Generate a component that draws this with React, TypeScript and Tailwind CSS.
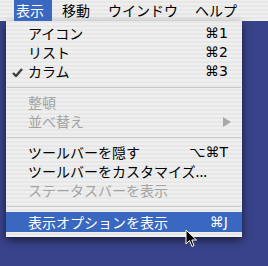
import React from "react";

const stripes =
  "bg-[repeating-linear-gradient(0deg,#efefef_0px,#efefef_2px,#e7e7e7_2px,#e7e7e7_4px)]";

const Row = ({
  label,
  shortcut,
  checked,
  disabled,
  arrow,
}: {
  label: string;
  shortcut?: string;
  checked?: boolean;
  disabled?: boolean;
  arrow?: boolean;
}) => (
  <div
    className={`relative flex h-[19px] items-center pl-[22px] pr-[14px] ${
      disabled ? "text-[#a3a3a3]" : "text-black"
    }`}
  >
    {checked && (
      <svg
        className="absolute left-[6px] top-[6px]"
        width="11"
        height="9"
        viewBox="0 0 11 9"
      >
        <path d="M1 5 L4 8 L10 1" stroke="#404040" strokeWidth="2.4" fill="none" />
      </svg>
    )}
    <span className="flex-1">{label}</span>
    {shortcut && (
      <span className="font-['DejaVu_Sans',sans-serif] text-[14px]">{shortcut}</span>
    )}
    {arrow && (
      <span className="mr-[-3px] h-0 w-0 border-y-[5px] border-l-[8px] border-y-transparent border-l-[#a8a8a8]" />
    )}
  </div>
);

const Sep = () => (
  <div className="flex h-[12px] items-center">
    <div className="mx-[1px] h-px flex-1 bg-[#c9c9c9]" />
  </div>
);

export default function App() {
  return (
    <div className="relative h-[266px] w-[268px] overflow-hidden bg-[#39438a] font-['Noto_Sans_CJK_JP',sans-serif] text-[14px] leading-[19px]">
      <div className={`flex h-[21px] items-center ${stripes} text-black`}>
        <div className="ml-[14px] flex h-[21px] items-center bg-[#3a68c0] pl-[2px] pr-[8px] text-white">
          表示
        </div>
        <span className="ml-[10px]">移動</span>
        <span className="ml-[18px]">ウインドウ</span>
        <span className="ml-[17px]">ヘルプ</span>
      </div>
      <div
        className={`ml-[6px] w-[236px] ${stripes} pt-[3px] pb-[5px] shadow-[0_3px_8px_rgba(0,0,0,0.6)]`}
      >
        <Row label="アイコン" shortcut="⌘1" />
        <Row label="リスト" shortcut="⌘2" />
        <Row label="カラム" shortcut="⌘3" checked />
        <Sep />
        <Row label="整頓" disabled />
        <Row label="並べ替え" disabled arrow />
        <Sep />
        <Row label="ツールバーを隠す" shortcut="⌥⌘T" />
        <Row label="ツールバーをカスタマイズ..." />
        <Row label="ステータスバーを表示" disabled />
        <Sep />
        <div className="flex h-[20px] items-center bg-[#3a68c0] pl-[22px] pr-[14px] text-white">
          <span className="flex-1">表示オプションを表示</span>
          <span className="font-['DejaVu_Sans',sans-serif] text-[14px]">⌘J</span>
        </div>
      </div>
      <svg
        className="absolute left-[185px] top-[229px]"
        width="13"
        height="20"
        viewBox="0 0 13 20"
      >
        <path
          d="M1 1 L1 15 L4.5 11.5 L7 17.5 L9 16.5 L6.8 11 L11.5 11 Z"
          fill="black"
          stroke="white"
          strokeWidth="1"
          strokeLinejoin="round"
        />
      </svg>
    </div>
  );
}
